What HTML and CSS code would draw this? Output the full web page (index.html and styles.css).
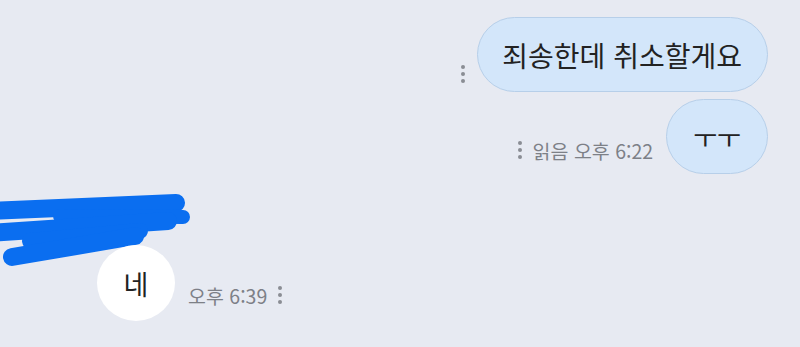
FILE: index.html
```html
<!DOCTYPE html>
<html lang="ko">
<head>
  <meta charset="UTF-8" />
  <meta name="viewport" content="width=device-width, initial-scale=1.0"/>
  <title>채팅</title>
  <link rel="stylesheet" href="styles.css">
</head>
<body>

  <div class="chat">
    <!-- 보낸 메시지 -->
    <div class="row sent">
      <span class="more"><i></i><i></i><i></i></span>
      <div class="bubble mine">죄송한데 취소할게요</div>
    </div>
    <div class="row sent">
      <div class="meta">
        <span class="more"><i></i><i></i><i></i></span>
        <span>읽음 오후 6:22</span>
      </div>
      <div class="bubble mine short">ㅜㅜ</div>
    </div>

    <!-- 받은 메시지 -->
    <div class="received">
      <svg class="redact" viewBox="0 0 200 80" width="200" height="80">
        <g stroke="#0a6ef0" stroke-linecap="round" fill="none">
          <path d="M-10 22 L176 14" stroke-width="18"/>
          <path d="M60 27 L183 28" stroke-width="14"/>
          <path d="M-10 44 L168 32" stroke-width="18"/>
          <path d="M30 52 L140 42" stroke-width="16"/>
          <path d="M12 68 L135 47" stroke-width="18"/>
        </g>
      </svg>
      <div class="row">
        <div class="bubble theirs">네</div>
        <div class="meta low">
          <span>오후 6:39</span>
          <span class="more"><i></i><i></i><i></i></span>
        </div>
      </div>
    </div>
  </div>

</body>
</html>
```

FILE: styles.css
```css
body {
  margin: 0;
  background: #e7eaf2;
  font-family: "Noto Sans CJK KR", "Noto Sans", sans-serif;
  color: #222;
  height: 347px;
  overflow: hidden;
}

.chat {
  display: flex;
  flex-direction: column;
  gap: 7px;
  padding: 17px 32px 0 0;
}

.row {
  display: flex;
  align-items: flex-end;
  gap: 13px;
}

.row.sent {
  justify-content: flex-end;
}

.bubble {
  display: flex;
  align-items: center;
  justify-content: center;
  box-sizing: border-box;
  font-size: 28px;
  line-height: 1;
}

.bubble.mine {
  height: 75px;
  padding: 0 25px 0 24px;
  border-radius: 38px;
  background: #d3e6fa;
  border: 1px solid #b7cfe9;
}

.bubble.short {
  padding: 0 26px;
  font-size: 26px;
}

.bubble.theirs {
  width: 78px;
  height: 76px;
  border-radius: 50%;
  background: #ffffff;
  font-size: 27px;
}

.meta {
  display: flex;
  align-items: center;
  gap: 11px;
  padding-bottom: 9px;
  font-size: 19.5px;
  color: #7d8087;
  white-space: nowrap;
}

.meta.low {
  padding-bottom: 11px;
}

.more {
  display: flex;
  flex-direction: column;
  gap: 3px;
  padding: 0 0 1px;
}

.more i {
  display: block;
  width: 4px;
  height: 4px;
  border-radius: 50%;
  background: #8a8d94;
}

.row.sent > .more {
  margin-bottom: 8px;
  margin-right: -1px;
}

.received {
  margin-top: 8px;
  display: flex;
  flex-direction: column;
}

.redact {
  display: block;
  margin-bottom: -24px;
}

.received .row {
  padding-left: 97px;
}
```
